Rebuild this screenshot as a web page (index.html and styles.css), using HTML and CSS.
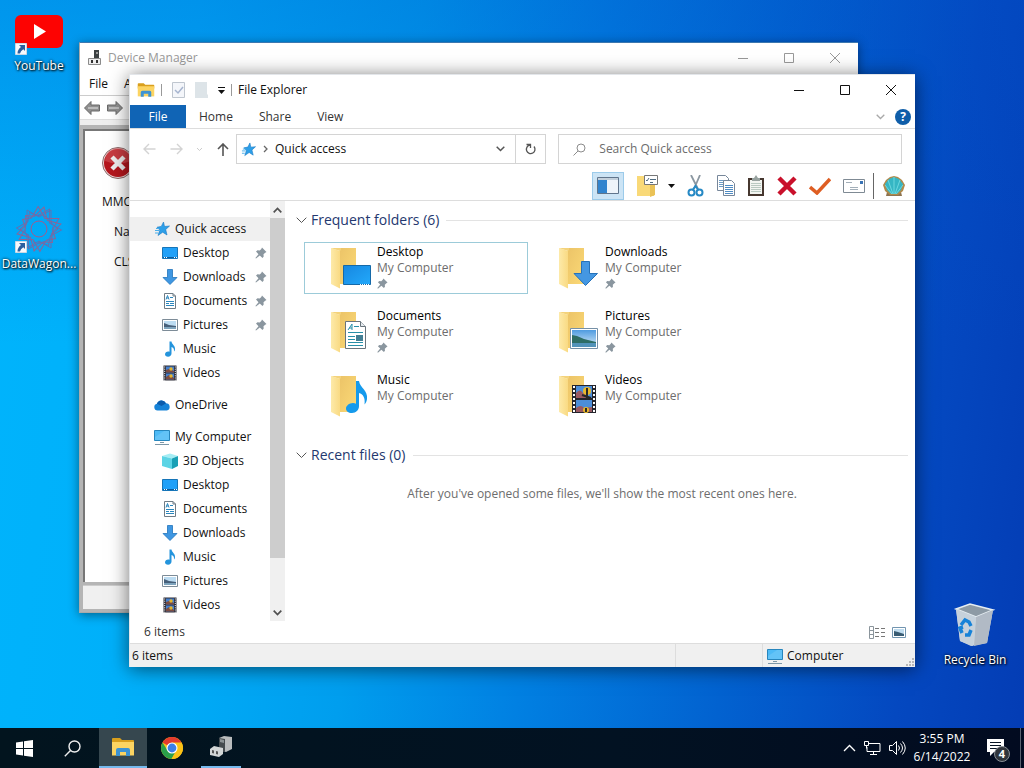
FILE: index.html
```html
<!DOCTYPE html>
<html lang="en">
<head>
<meta charset="utf-8">
<title>Desktop</title>
<link rel="stylesheet" href="styles.css">
</head>
<body>
<svg class="defs" aria-hidden="true">
  <defs>
    <linearGradient id="gFold" x1="0" y1="0" x2="1" y2="0"><stop offset="0" stop-color="#fdeaa9"/><stop offset="1" stop-color="#f9da83"/></linearGradient>
    <linearGradient id="gBack" x1="0" y1="0" x2="1" y2="1"><stop offset="0" stop-color="#ecc468"/><stop offset="1" stop-color="#fbd976"/></linearGradient>
    <linearGradient id="gBlue" x1="0" y1="0" x2="1" y2="1"><stop offset="0" stop-color="#1787e0"/><stop offset="1" stop-color="#22a9fb"/></linearGradient>
    <linearGradient id="gSky" x1="0" y1="0" x2="0" y2="1"><stop offset="0" stop-color="#4f9be0"/><stop offset="1" stop-color="#d8ecf8"/></linearGradient>
  </defs>
  <symbol id="i-star" viewBox="0 0 16 16"><path d="M9.500 1l1 4.500 5-.5-3.800 3.500 1.300 5.500-4.300-2.800-4.700 3.300 1.800-5.400L3 6.200l4.300-.8z" fill="#2d9fe8" stroke="#1879c4" stroke-width=".6"/><path d="M1 9.500h4M1 12h3M2 7.500h3" stroke="#49aeea"/></symbol>
  <symbol id="i-desktop" viewBox="0 0 16 16"><path d="M.5 2.500h15v11H.5z" fill="#20a0f8" stroke="#1675b8"/><path d="M1 12.500h14" stroke="#0c5b9c"/><path d="M2 12.500h1m1 0h1m7 0h1m1 0h1" stroke="#fff"/></symbol>
  <symbol id="i-down" viewBox="0 0 16 16"><path d="M5.500.5h5v8h4.500L8 15.500 1 8.500h4.500z" fill="#3f97e2" stroke="#2274bb" stroke-width=".8"/></symbol>
  <symbol id="i-doc" viewBox="0 0 16 16"><path d="M2.500.5H11l2.500 2.500v12.500h-11z" fill="#fff" stroke="#6f7c86"/><path d="M11 .5V3h2.500" fill="none" stroke="#6f7c86"/><path d="M4 6.500l1.500-4L7 6.500M4.500 5h2M8 4.500h3M4 8.500h8M4 10.500h3M4 12.500h8M8 10.500h4" fill="none" stroke="#2a86bd"/></symbol>
  <symbol id="i-pic" viewBox="0 0 16 16"><path d="M.5 2.500h15v11H.5z" fill="#fff" stroke="#7d8c98"/><path d="M2 4h12v8H2z" fill="#bcdcf2"/><path d="M2 6l5 2 7 1v3H2z" fill="#47607a"/><path d="M2 10h12v2H2z" fill="#7ea4bd"/></symbol>
  <symbol id="i-music" viewBox="0 0 16 16"><path d="M7.500.5h2c.3 3 4 4 3.500 8-.1.900-.5 1.500-1 2 .3-3-1-4-2.500-4.500V12.500c0 2-1.500 3.200-3.400 3.200S3 14.600 3 13.200s1.500-2.700 3.200-2.700c.5 0 1 .1 1.300.3z" fill="#2494dc"/></symbol>
  <symbol id="i-video" viewBox="0 0 16 16"><path d="M1.500.5h13v15h-13z" fill="#2a2a35"/><path d="M4 1.500h8v6H4zM4 8.500h8v6H4z" fill="#4580cf"/><path d="M4 5l3-1 5 2v1.500H4zM4 12l3-2 5 3v1.500H4z" fill="#7c4c42"/><circle cx="9" cy="4" r="1.700" fill="#e5b52c"/><circle cx="9" cy="11" r="1.700" fill="#e5b52c"/><path d="M2.700 1.500v14M13.300 1.500v14" stroke="#fff" stroke-dasharray="1 1.200"/></symbol>
  <symbol id="i-cloud" viewBox="0 0 16 16"><path d="M3.500 13.500a3.400 3.400 0 0 1-.6-6.700A5 5 0 0 1 12 6.200a3.700 3.700 0 0 1 .8 7.300z" fill="#1683d8"/><path d="M2.900 6.800A5 5 0 0 1 12 6.200L7.500 9z" fill="#0b5cad"/></symbol>
  <symbol id="i-pc" viewBox="0 0 16 16"><path d="M.5 1.500h15v10H.5z" fill="#4dbaf6" stroke="#2786bd"/><path d="M1 8l9-6h5v9H1z" fill="#7accf8" opacity=".5"/><path d="M6 13.500h4M1 15.500h14" stroke="#7c97a8"/></symbol>
  <symbol id="i-cube" viewBox="0 0 16 16"><path d="M0 3l8-2.500 8 2.500-6 2.500z" fill="#a5edf4"/><path d="M0 3l10 2.500V16L0 13z" fill="#5cd4e5"/><path d="M10 5.500L16 3v10l-6 3z" fill="#18a0b5"/></symbol>
  <symbol id="i-pin" viewBox="0 0 12 12"><path d="M7 .5l4.500 4.500-1.300.7-1.700 1.600.2 2.200L7.500 11 4.800 8.500 1 11.600.4 11l3.100-3.800L1 4.500l1.500-1.200 2.200.2L6.300 2z" fill="#8a969f"/></symbol>
  <symbol id="i-base" viewBox="0 0 44 48"><path d="M9 4h16v36H9z" fill="url(#gBack)"/><path d="M0 4l9 3v37.500L0 40z" fill="url(#gFold)"/><path d="M0 4h10v2L9 7z" fill="#f4d37b"/></symbol>
  <symbol id="i-explorer" viewBox="0 0 24 20"><path d="M1 2q0-1 1-1h7l2 2h11q1 0 1 1v4H1z" fill="#d99f1d"/><path d="M1 5h22v13.500H1z" fill="#fcd462"/><path d="M5 19v-6q0-2 2-2h10q2 0 2 2v6h-4v-4H9v4z" fill="#3d93d3"/></symbol>
  <symbol id="i-shortcut" viewBox="0 0 12 12"><path d="M.5.5h11v11H.5z" fill="#f6f9fc" stroke="#cbd8e4"/><path d="M4 2h6v6L8.300 6.300Q5.500 8 5 10.500H2.500Q2.500 6.500 6 4z" fill="#2c5f9e"/></symbol>
  <symbol id="i-rosette" viewBox="0 0 48 48"><g fill="none" stroke-width="1" stroke="#5f72b4"><path id="sq" d="M12 5l12 7 12-7v13l7 6-7 6v13l-12-7-12 7V30l-7-6 7-6z"/><use href="#sq" transform="rotate(30 24 24)" stroke="#8d6496"/><use href="#sq" transform="rotate(60 24 24)"/><use href="#sq" transform="rotate(45 24 24)" stroke="#8d6496"/><circle cx="24" cy="24" r="8" stroke="#a05c8e"/><circle cx="24" cy="24" r="14" stroke-dasharray="3 2"/></g></symbol>
  <symbol id="i-device" viewBox="0 0 24 24"><path d="M10 3l5-2 8 1v12l-6 3-7-2z" fill="#b9bcbd"/><path d="M10 3l6 1v13l-6-2z" fill="#454b4e"/><path d="M11 4l4 1v3l-4-1z" fill="#8b9294"/><path d="M1 14l4-3 9 2v6l-4 3-9-2z" fill="#d3d6d6"/><path d="M3 15l2 .5v3L3 18zM7 16l2 .5v3L7 19z" fill="#555"/></symbol>
</svg>

<main class="desktop">
  <nav class="shortcuts" aria-label="Desktop shortcuts">
    <a class="shortcut" href="#youtube">
      <span class="art"><svg width="48" height="48" viewBox="0 0 48 48"><rect y="8" width="48" height="33" rx="6" fill="#fd0302"/><path d="M19 17v15l12-7.500z" fill="#fff"/></svg><svg class="arrow"><use href="#i-shortcut"/></svg></span>
      YouTube
    </a>
    <a class="shortcut" href="#datawagon">
      <span class="art"><svg width="48" height="48"><use href="#i-rosette"/></svg><svg class="arrow"><use href="#i-shortcut"/></svg></span>
      DataWagon...
    </a>
  </nav>
  <a class="shortcut bin" href="#bin">
    <svg width="48" height="48" viewBox="0 0 48 48"><path d="M5 8L19 3l23 6-6 33-16 3-11-5z" fill="#cdd6dd"/><path d="M5 8l14-5 23 6-17 7z" fill="#8d9aa5" stroke="#e6edf2" stroke-width="1.500"/><path d="M25 16L42 9l-6 33-13 3z" fill="#b1bac5"/><path d="M5 8l20 8-3 29-13-5z" fill="#c6d1db"/><path d="M10 24l4-5 4 2 2 4m0 4l-2 5h-4m-3-2l-2-5 3-1" fill="none" stroke="#1682d8" stroke-width="3.500"/></svg>
    Recycle Bin
  </a>

  <section class="window device" aria-label="Device Manager">
    <header class="device-title">
      <svg width="16" height="16" viewBox="0 0 16 16"><path d="M7 0h5v8H7z" fill="#3c4143"/><path d="M9 2h2v2H9z" fill="#999"/><path d="M1.500 8.500h12v6h-12z" fill="#eee" stroke="#8b8b8b"/><path d="M4 10h2v3H4zM9 10h2v3H9z" fill="#333"/></svg>
      <span>Device Manager</span>
      <div class="caption">
        <button aria-label="Minimize"><svg viewBox="0 0 12 12"><path d="M1 6.500h10"/></svg></button>
        <button aria-label="Maximize"><svg viewBox="0 0 12 12"><path d="M1.500 1.500h9v9h-9z"/></svg></button>
        <button aria-label="Close"><svg viewBox="0 0 12 12"><path d="M1 1l10 10M11 1L1 11"/></svg></button>
      </div>
    </header>
    <div class="device-menu"><button>File</button><button>Action</button></div>
    <div class="device-tools">
      <button aria-label="Back"><svg width="16" height="16" viewBox="0 0 16 16"><path d="M.5 8L7 1.500v3.500h8.500v6H7v3.500z" fill="#8f8f8f" stroke="#686868"/><path d="M4 8h10" stroke="#bbb" stroke-width="2"/></svg></button>
      <button aria-label="Forward"><svg width="16" height="16" viewBox="0 0 16 16"><path d="M15.500 8L9 1.500v3.500H.5v6H9v3.500z" fill="#8f8f8f" stroke="#686868"/><path d="M2 8h10" stroke="#bbb" stroke-width="2"/></svg></button>
    </div>
    <div class="device-body">
      <div class="device-page">
        <svg width="32" height="32" viewBox="0 0 32 32"><circle cx="16" cy="16" r="15.500" fill="#efdada" stroke="#8c6a6a"/><circle cx="16" cy="16" r="14" fill="#b5161d"/><path d="M3 14a13 13 0 0 1 26 0q-13 5-26 0z" fill="#d4555a" opacity=".6"/><path d="M10 10l12 12M22 10L10 22" stroke="#eee" stroke-width="4.500"/></svg>
        <p class="msg">MMC has detected an error</p>
        <p>Name:</p>
        <p>CLSID:</p>
      </div>
    </div>
    <div class="device-status"></div>
  </section>

  <section class="window explorer" aria-label="File Explorer">
    <header class="title">
      <svg width="18" height="16"><use href="#i-explorer"/></svg>
      <i class="bar"></i>
      <button aria-label="Properties"><svg width="13" height="16" viewBox="0 0 13 16"><path d="M.5.500h12v15H.5z" fill="#f4f6fa" stroke="#bfc6cf"/><path d="M3 8l3 3 5-6" fill="none" stroke="#a6b4cf" stroke-width="1.500"/></svg></button>
      <button aria-label="New folder"><svg width="13" height="16" viewBox="0 0 13 16"><path d="M0 0h12v12l1 1v3H0z" fill="#dde4e8"/></svg></button>
      <button aria-label="Customize toolbar"><svg width="7" height="9" viewBox="0 0 7 9"><path d="M0 1.500h7" stroke="#111"/><path d="M0 4h7L3.500 8z" fill="#111"/></svg></button>
      <i class="bar"></i>
      <span>File Explorer</span>
      <div class="caption">
        <button aria-label="Minimize"><svg viewBox="0 0 12 12"><path d="M1 6.500h10"/></svg></button>
        <button aria-label="Maximize"><svg viewBox="0 0 12 12"><path d="M1.500 1.500h9v9h-9z"/></svg></button>
        <button aria-label="Close"><svg viewBox="0 0 12 12"><path d="M1 1l10 10M11 1L1 11"/></svg></button>
      </div>
    </header>
    <div class="tabs">
      <button class="tab file">File</button><button class="tab">Home</button><button class="tab">Share</button><button class="tab">View</button>
      <div class="ribbon-end">
        <button aria-label="Expand ribbon"><svg width="9" height="6" viewBox="0 0 9 6"><path d="M.7.7l3.800 3.800L8.300.7" fill="none" stroke="#a9a9a9" stroke-width="1.300"/></svg></button>
        <button class="help" aria-label="Help">?</button>
      </div>
    </div>
    <div class="address">
      <div class="moves">
        <button aria-label="Back"><svg width="13" height="12" viewBox="0 0 13 12"><path d="M6 1L1 6l5 5M1 6h11.500" fill="none" stroke="#d3d3d3" stroke-width="1.400"/></svg></button>
        <button aria-label="Forward"><svg width="13" height="12" viewBox="0 0 13 12"><path d="M7 1l5 5-5 5M12 6H.5" fill="none" stroke="#d3d3d3" stroke-width="1.400"/></svg></button>
        <button aria-label="Recent"><svg width="7" height="5" viewBox="0 0 7 5"><path d="M1 1l2.500 2.500L6 1" fill="none" stroke="#ccc"/></svg></button>
        <button aria-label="Up"><svg width="12" height="13" viewBox="0 0 12 13"><path d="M1 6l5-5 5 5M6 1v12" fill="none" stroke="#555" stroke-width="1.600"/></svg></button>
      </div>
      <div class="path">
        <svg width="15" height="15"><use href="#i-star"/></svg>
        <svg width="5" height="8" viewBox="0 0 5 8"><path d="M1 1l3 3-3 3" fill="none" stroke="#666" stroke-width="1.300"/></svg>
        <button class="crumb">Quick access</button>
        <button class="drop" aria-label="Previous locations"><svg width="9" height="6" viewBox="0 0 9 6"><path d="M.7.7l3.800 3.800L8.300.7" fill="none" stroke="#555" stroke-width="1.500"/></svg></button>
        <button class="refresh" aria-label="Refresh"><svg width="12" height="12" viewBox="0 0 12 12"><path d="M9 3.500A4.300 4.300 0 1 1 5 2M1.500 1.500H5.500V5" fill="none" stroke="#555" stroke-width="1.300"/></svg></button>
      </div>
      <label class="search">
        <svg width="13" height="13" viewBox="0 0 13 13"><circle cx="8" cy="5" r="4" fill="none" stroke="#8c8c8c"/><path d="M5 8l-4.500 4.500" stroke="#8c8c8c"/></svg>
        <input type="search" placeholder="Search Quick access" aria-label="Search Quick access">
      </label>
    </div>
    <div class="tools">
      <button class="pane" aria-label="Navigation pane"><svg width="22" height="17" viewBox="0 0 22 17"><path d="M.5.500h21v16H.5z" fill="#eef4fa" stroke="#60758c"/><path d="M1 1h20v2H1z" fill="#c3d0dc"/><path d="M1 3h9v13H1z" fill="#3184ce"/></svg></button>
      <button class="views" aria-label="Folder options"><svg width="22" height="22" viewBox="0 0 22 22"><path d="M1 1h7v2h10v18H1z" fill="#f9d978"/><path d="M14 4h5v16l-5 2z" fill="#eac257"/><path d="M8.500.500h13v9h-13z" fill="#fff" stroke="#777"/><path d="M10 5l1 1 2-3M14 4.500h6M14 7.500h3" fill="none" stroke="#4e6a80"/></svg><svg width="7" height="4" viewBox="0 0 7 4"><path d="M0 0h7L3.500 4z" fill="#111"/></svg></button>
      <button aria-label="Cut"><svg width="18" height="22" viewBox="0 0 18 22"><path d="M4 0l7 14M13 0L7 14" stroke="#8b97a1" stroke-width="1.800"/><circle cx="4.500" cy="17.500" r="3" fill="none" stroke="#2689c5" stroke-width="2"/><circle cx="12.500" cy="17.500" r="3" fill="none" stroke="#2689c5" stroke-width="2"/><path d="M6 14.500L8.500 11l2.500 3.500" fill="none" stroke="#2689c5" stroke-width="2"/></svg></button>
      <button aria-label="Copy"><svg width="18" height="22" viewBox="0 0 18 22"><path d="M.5.500h8l3 3v12H.5z" fill="#fff" stroke="#77879a"/><path d="M2 5.500h7M2 7.500h7M2 9.500h7M2 11.500h7" stroke="#6c9cc6"/><path d="M6.500 5.500h8l3 3v12h-11z" fill="#fff" stroke="#77879a"/><path d="M8 10.500h8M8 12.500h8M8 14.500h8M8 16.500h8M8 18.500h8" stroke="#4e8bc3"/></svg></button>
      <button aria-label="Paste"><svg width="18" height="22" viewBox="0 0 18 22"><path d="M1 3h16v18H1z" fill="#46372f"/><path d="M3 5h12v14H3z" fill="#f2f5f1"/><path d="M4 8.500h10M4 10.500h10M4 12.500h10M4 14.500h10M4 16.500h10" stroke="#b9c9c1"/><path d="M5 3h2l2-3 2 3h2v3H5z" fill="#97a29f"/></svg></button>
      <button aria-label="Delete"><svg width="20" height="20" viewBox="0 0 20 20"><path d="M2 2l16 16M18 2L2 18" stroke="#c9102b" stroke-width="4.500"/></svg></button>
      <button aria-label="Apply"><svg width="22" height="18" viewBox="0 0 22 18"><path d="M1 10l7 6L21 2" fill="none" stroke="#de5e23" stroke-width="3.500"/></svg></button>
      <button aria-label="Mail"><svg width="22" height="14" viewBox="0 0 22 14"><path d="M.5.500h21v13H.5z" fill="#fff" stroke="#7f8a94"/><path d="M3 3.500h6M7 8.500h8M7 10.500h8" stroke="#a3afb9"/><path d="M17 2h3v3h-3z" fill="#3973b5"/></svg></button>
      <i class="tool-bar"></i>
      <button aria-label="Shell"><svg width="24" height="22" viewBox="0 0 24 22"><path d="M5 17h14l1 4H4z" fill="#8d7350"/><path d="M12 1l4 1 4 3 3 5-2 6-5 4H8l-5-4-2-6 3-5 4-3z" fill="#b08a4c"/><path d="M12 2l5 2 4 5-2 6-4 4H9l-4-4-2-6 4-5z" fill="#35b6c4"/><path d="M12 19V2M11 19L6 5M13 19l5-14M10 19L3 10M14 19l7-9" stroke="#7be0e4" stroke-width=".8"/></svg></button>
    </div>

    <div class="body">
      <nav class="tree" aria-label="Folders">
        <a class="root on" href="#quick"><svg><use href="#i-star"/></svg>Quick access</a>
        <a href="#q1"><svg><use href="#i-desktop"/></svg>Desktop<svg class="pin"><use href="#i-pin"/></svg></a>
        <a href="#q2"><svg><use href="#i-down"/></svg>Downloads<svg class="pin"><use href="#i-pin"/></svg></a>
        <a href="#q3"><svg><use href="#i-doc"/></svg>Documents<svg class="pin"><use href="#i-pin"/></svg></a>
        <a href="#q4"><svg><use href="#i-pic"/></svg>Pictures<svg class="pin"><use href="#i-pin"/></svg></a>
        <a href="#q5"><svg><use href="#i-music"/></svg>Music</a>
        <a href="#q6"><svg><use href="#i-video"/></svg>Videos</a>
        <a class="root gap" href="#od"><svg><use href="#i-cloud"/></svg>OneDrive</a>
        <a class="root gap" href="#pc"><svg><use href="#i-pc"/></svg>My Computer</a>
        <a href="#c1"><svg><use href="#i-cube"/></svg>3D Objects</a>
        <a href="#c2"><svg><use href="#i-desktop"/></svg>Desktop</a>
        <a href="#c3"><svg><use href="#i-doc"/></svg>Documents</a>
        <a href="#c4"><svg><use href="#i-down"/></svg>Downloads</a>
        <a href="#c5"><svg><use href="#i-music"/></svg>Music</a>
        <a href="#c6"><svg><use href="#i-pic"/></svg>Pictures</a>
        <a href="#c7"><svg><use href="#i-video"/></svg>Videos</a>
      </nav>
      <div class="scroll">
        <button aria-label="Scroll up"><svg width="9" height="6" viewBox="0 0 9 6"><path d="M.7 5.300l3.800-3.800 3.800 3.800" fill="none" stroke="#505050" stroke-width="1.700"/></svg></button>
        <div class="track"><div class="thumb"></div></div>
        <button aria-label="Scroll down"><svg width="9" height="6" viewBox="0 0 9 6"><path d="M.7.7l3.800 3.800L8.300.7" fill="none" stroke="#505050" stroke-width="1.700"/></svg></button>
      </div>
      <div class="content">
        <h2><svg width="11" height="7" viewBox="0 0 11 7"><path d="M.7.7l4.800 4.800L10.300.7" fill="none" stroke="#555"/></svg>Frequent folders (6)</h2>
        <div class="tiles">
          <a class="tile sel" href="#t1"><svg class="big" viewBox="0 0 44 48"><use href="#i-base"/><path d="M12.500 21.500h27v19h-27z" fill="url(#gBlue)" stroke="#1569a8"/><path d="M29 40.500h10" stroke="#fff" stroke-dasharray="1 1"/></svg><span><b>Desktop</b>My Computer<svg class="pin"><use href="#i-pin"/></svg></span></a>
          <a class="tile" href="#t2"><svg class="big" viewBox="0 0 44 48"><use href="#i-base"/><path d="M22.500 17.500h8v12h8L26.500 41.500 15 29.500h7.500z" fill="#4497e2" stroke="#2672b9"/></svg><span><b>Downloads</b>My Computer<svg class="pin"><use href="#i-pin"/></svg></span></a>
          <a class="tile" href="#t3"><svg class="big" viewBox="0 0 44 48"><use href="#i-base"/><path d="M14.500 13.500h15l5 5v22h-20z" fill="#fff" stroke="#69747c"/><path d="M29.500 13.500v5h5" fill="#e5eaee" stroke="#69747c"/><path d="M17 22l4-6v6M18 20h3M23 18.500h5M17 24.500h15M17 28.500h7M17 31.500h7M17 34.500h15M17 37.500h15" stroke="#278fa8" fill="none"/><path d="M25 27h7v6h-7z" fill="#437f94"/></svg><span><b>Documents</b>My Computer<svg class="pin"><use href="#i-pin"/></svg></span></a>
          <a class="tile" href="#t4"><svg class="big" viewBox="0 0 44 48"><use href="#i-base"/><path d="M11.500 20.500h27v20h-27z" fill="#fff" stroke="#7590a7"/><path d="M13 22h24v17H13z" fill="url(#gSky)"/><path d="M13 27l5 1 7 3 12 3v2H13z" fill="#2e6d65"/><path d="M13 35h24v4H13z" fill="#5293b9"/></svg><span><b>Pictures</b>My Computer<svg class="pin"><use href="#i-pin"/></svg></span></a>
          <a class="tile" href="#t5"><svg class="big" viewBox="0 0 44 48"><use href="#i-base"/><path d="M25 9h3c1 7 9 9 8 18-.3 2-1 4-2.500 5.500C34.500 26 32 22 28 21v13c0 4-3 7-7 7s-6-2-6-4.500 3-5.500 7-5.500c1.200 0 2.300.3 3 .7z" fill="#159aec"/></svg><span><b>Music</b>My Computer</span></a>
          <a class="tile" href="#t6"><svg class="big" viewBox="0 0 44 48"><use href="#i-base"/><path d="M13 13h24v28H13z" fill="#23242c"/><path d="M17 14h16v12H17zM17 28h16v12H17z" fill="#4c8ed9"/><path d="M17 21q4-5 7 0l3 1v4H17zM17 36q5-4 8 0l8-1v5H17z" fill="#9a5a63"/><circle cx="28" cy="19" r="4" fill="#e9b82a"/><circle cx="27" cy="38" r="3" fill="#e9b82a"/><path d="M28 16v11M23 23l9 3M27 36v4" stroke="#282828" stroke-width="2"/><path d="M15 14v27M35 14v27" stroke="#fff" stroke-width="2" stroke-dasharray="2 2"/></svg><span><b>Videos</b>My Computer</span></a>
        </div>
        <h2><svg width="11" height="7" viewBox="0 0 11 7"><path d="M.7.7l4.800 4.800L10.300.7" fill="none" stroke="#555"/></svg>Recent files (0)</h2>
        <p class="empty">After you've opened some files, we'll show the most recent ones here.</p>
      </div>
    </div>
    <div class="count">
      <span>6 items</span>
      <button aria-label="Details view"><svg width="17" height="13" viewBox="0 0 17 13"><path d="M.5.500h4v12h-4zM.5 4.500h4M.5 8.500h4" fill="#fff" stroke="#8b959c"/><path d="M6 2.500h11M6 6.500h11M6 10.500h11" stroke="#777" stroke-dasharray="4 2"/></svg></button>
      <button aria-label="Large icons view"><svg width="14" height="11" viewBox="0 0 14 11"><path d="M.5.500h13v10H.5z" fill="#fff" stroke="#7295b0"/><path d="M2 2h10v7H2z" fill="#bfdcef"/><path d="M2 4l4 1 6 2v2H2z" fill="#395c73"/></svg></button>
    </div>
    <footer class="status">
      <span class="items">6 items</span><span class="blank"></span>
      <span class="zone"><svg width="16" height="16"><use href="#i-pc"/></svg>Computer</span>
      <svg class="grip" width="9" height="9" viewBox="0 0 9 9"><path d="M6 1h2M3 4h2M6 4h2M0 7h2M3 7h2M6 7h2" stroke="#b8b8b8" stroke-width="2"/></svg>
    </footer>
  </section>
</main>

<footer class="taskbar">
  <button class="task" aria-label="Start"><svg width="17" height="17" viewBox="0 0 17 17"><path d="M0 2.500l7-1V8H0zM8 1.300L17 0v8H8zM0 9h7v6.500l-7-1zM8 9h9v8l-9-1.300z" fill="#fff"/></svg></button>
  <button class="task" aria-label="Search"><svg width="17" height="17" viewBox="0 0 17 17"><circle cx="10.500" cy="6.500" r="5.500" fill="none" stroke="#eee" stroke-width="1.400"/><path d="M6.500 10.500L.8 16.200" stroke="#eee" stroke-width="1.400"/></svg></button>
  <button class="task active" aria-label="File Explorer"><svg width="24" height="20"><use href="#i-explorer"/></svg></button>
  <button class="task" aria-label="Chrome"><svg width="24" height="24" viewBox="0 0 24 24"><circle cx="12" cy="12" r="11" fill="#fbc116"/><path d="M12 12L2.500 6.500A11 11 0 0 1 21.500 6.500z" fill="#e33b2e"/><path d="M2.500 6.500A11 11 0 0 0 11.500 23L16.500 14 12 12 7.500 14.500z" fill="#2aa04a"/><path d="M12 6.500h9.500A11 11 0 0 1 11.500 23l5-8.500z" fill="#fbc116"/><circle cx="12" cy="12" r="5.500" fill="#fff"/><circle cx="12" cy="12" r="4.400" fill="#3d7fe8"/></svg></button>
  <button class="task running" aria-label="Device Manager"><svg width="24" height="24"><use href="#i-device"/></svg></button>
  <div class="tray">
    <button aria-label="Hidden icons"><svg width="13" height="8" viewBox="0 0 13 8"><path d="M1 7l5.500-5.500L12 7" fill="none" stroke="#fff" stroke-width="1.300"/></svg></button>
    <button aria-label="Network"><svg width="17" height="14" viewBox="0 0 17 14"><path d="M5 2.500h11v8H3V6M9.500 10.500v3M6 13.500h7M.5.500h4v4h-4zM2.500 4.500v3" fill="none" stroke="#fff"/></svg></button>
    <button aria-label="Volume"><svg width="17" height="14" viewBox="0 0 17 14"><path d="M.5 4.500h3l4-4v13l-4-4h-3zM9.500 4.500q2 2.500 0 5M11.500 2.500q4 4.500 0 9M13.500.500q5.500 6.500 0 13" fill="none" stroke="#fff"/></svg></button>
    <button class="clock"><span>3:55 PM</span><span>6/14/2022</span></button>
    <button class="notes" aria-label="4 notifications"><svg width="17" height="18" viewBox="0 0 17 18"><path d="M0 0h17v13H7l-4 4v-4H0z" fill="#fff"/><path d="M3 3.500h11M3 6.500h11M3 9.500h11" stroke="#071425" stroke-width="1.200"/></svg><span class="badge">4</span></button>
    <button class="peek" aria-label="Show desktop"></button>
  </div>
</footer>
</body>
</html>
```
FILE: styles.css
```css
* { box-sizing: border-box; }
body {
  margin: 0;
  min-height: 100vh;
  display: flex;
  flex-direction: column;
  font: 12px/16px "Open Sans", "Noto Sans", sans-serif;
  color: #111;
  background:
    linear-gradient(to bottom, rgba(0, 80, 200, .3), rgba(0, 100, 220, 0) 45%),
    linear-gradient(97deg, #00b4fc 0%, #00b0fa 18%, #009eee 38%, #0180e2 54%, #0262d0 72%, #0448c0 88%, #043cb4 100%);
}
button { font: inherit; color: inherit; border: 0; padding: 0; margin: 0; background: none; display: flex; align-items: center; justify-content: center; }
a { color: inherit; text-decoration: none; }
svg { flex: none; display: block; }
h2, p { margin: 0; font-weight: normal; }
.defs { position: absolute; width: 0; height: 0; }
.desktop { flex: 1; position: relative; overflow: hidden; }

.shortcuts { width: 78px; display: flex; flex-direction: column; gap: 131px; padding-top: 7px; }
.shortcut { display: flex; flex-direction: column; align-items: center; gap: 3px; color: #fff; text-shadow: 1px 1px 2px #000, 0 0 3px #000; white-space: nowrap; }
.art { position: relative; }
.arrow { position: absolute; left: 0; bottom: 0; width: 12px; height: 12px; }
.bin { position: absolute; right: 12px; top: 601px; width: 74px; }

.window { position: absolute; display: flex; flex-direction: column; background: #fff; }
.caption { display: flex; margin-left: auto; }
.caption button { width: 46px; height: 28px; }
.caption svg { width: 12px; height: 12px; fill: none; stroke: currentColor; }

.device { left: 79px; right: 166px; top: 42px; height: 571px; border: 1px solid #aaa; border-top-color: #3d78b0; border-right: 0; box-shadow: 0 2px 10px rgba(0, 0, 0, .45); }
.device-title { display: flex; align-items: center; gap: 5px; padding-left: 7px; height: 29px; color: #999; }
.device-menu { display: flex; gap: 16px; padding: 0 9px; height: 24px; border-bottom: 1px solid #ccc; }
.device-tools { display: flex; gap: 7px; padding: 0 4px; height: 24px; border-bottom: 1px solid #ddd; }
.device-body { flex: 1; padding: 4px 3px 0; background: #b5b5b5; border-top: 5px solid #eee; }
.device-page { height: 100%; border: 2px solid #777; border-right: 0; border-bottom: 0; padding: 16px 0 0 17px; background: #fff; }
.device-page p { margin-left: 12px; margin-top: 14px; height: 16px; overflow: hidden; white-space: nowrap; }
.device-page .msg { margin-left: 0; margin-top: 15px; }
.device-status { height: 24px; margin: 0 3px 3px; background: #f0f0f0; border-top: 1px solid #ccc; box-shadow: 0 0 0 3px #b5b5b5; }

.explorer { left: 129px; right: 109px; top: 74px; border: 1px solid #e3e6ea; border-right: 0; border-bottom: 0; box-shadow: 0 2px 18px rgba(0, 0, 0, .55); }
.title { display: flex; align-items: center; gap: 6px; height: 30px; padding-left: 7px; }
.title > button { margin-left: 4px; }
.title > .caption { padding-right: 1px; }
.bar { width: 1px; height: 12px; background: #999; }
.tabs { display: flex; height: 24px; border-bottom: 1px solid #ddd; color: #333; }
.tab { padding: 0 13px; height: 23px; }
.tab.file { width: 56px; background: #1064b5; color: #fff; }
.ribbon-end { display: flex; align-items: center; gap: 10px; margin-left: auto; padding-right: 4px; }
.help { width: 16px; height: 16px; border-radius: 50%; background: #0f5ea9; color: #fff; font-weight: bold; }

.address { display: flex; padding: 5px 13px 1px 0; }
.moves { width: 106px; display: flex; align-items: center; justify-content: space-between; padding: 0 7px 0 13px; }
.path, .search { display: flex; align-items: center; height: 30px; min-width: 0; border: 1px solid #d4d4d4; }
.path { flex: 312 1 0; padding-left: 4px; gap: 7px; }
.crumb { white-space: nowrap; }
.drop { margin-left: auto; width: 15px; }
.refresh { width: 30px; height: 28px; border-left: 1px solid #d4d4d4; }
.search { flex: 336 1 0; margin-left: 12px; padding-left: 14px; gap: 13px; }
.search input { flex: 1; min-width: 0; border: 0; padding: 0; outline: 0; font: inherit; background: none; }
.search input::placeholder { color: #6d6d6d; opacity: 1; }

.tools { display: flex; justify-content: flex-end; align-items: center; gap: 12px; height: 36px; padding: 6px 9px 0 0; border-bottom: 1px solid #ddd; }
.pane { width: 32px; height: 28px; background: #cce4f5; border: 1px solid #9ccbea; }
.views { gap: 10px; }
.tool-bar { width: 1px; height: 26px; background: #666; margin: 0 -4px; }

.body { display: flex; }
.tree { width: 140px; padding: 16px 0 4px; }
.tree a { display: flex; align-items: center; gap: 5px; height: 24px; padding-left: 32px; white-space: nowrap; }
.tree svg { width: 16px; height: 16px; }
.tree .root { padding-left: 24px; }
.tree .on { background: #f0f0f0; }
.tree .gap { margin-top: 8px; }
.tree .pin { width: 12px; height: 12px; margin: 0 3px 0 auto; }
.scroll { width: 15px; display: flex; flex-direction: column; background: #f0f0f0; }
.scroll button { height: 17px; }
.track { flex: 1; }
.thumb { height: 88%; background: #cdcdcd; }
.content { flex: 1; min-width: 0; padding: 8px 7px 0 11px; }
h2 { display: flex; align-items: center; gap: 4px; height: 22px; font-size: 14px; line-height: 22px; color: #24386f; }
h2::after { content: ""; flex: 1; height: 1px; margin-left: 3px; background: #e3e3e3; }
.tiles { display: grid; grid-template-columns: repeat(2, 224px); gap: 12px 4px; padding: 11px 0 22px 8px; }
.tile { height: 52px; display: flex; border: 1px solid transparent; padding-left: 26px; color: #6d6d6d; }
.tile.sel { border-color: #9ccbd9; }
.big { width: 44px; height: 48px; margin-top: 1px; }
.tile span { padding: 1px 0 0 2px; }
.tile b { display: block; font-weight: normal; color: #000; }
.tile .pin { width: 11px; height: 11px; margin-top: 2px; }
.empty { text-align: center; margin-top: 20px; color: #6d6d6d; }

.count { display: flex; align-items: center; gap: 6px; height: 22px; padding: 0 9px 0 14px; color: #333; }
.count span { margin-right: auto; }
.status { display: flex; height: 24px; background: #f0f0f0; border-top: 1px solid #ddd; line-height: 24px; }
.items { flex: 1; padding-left: 2px; }
.blank { width: 88px; border: solid #ddd; border-width: 0 1px; }
.zone { width: 143px; display: flex; align-items: center; gap: 4px; padding-left: 4px; }
.grip { align-self: flex-end; }

.taskbar { height: 40px; display: flex; color: #fff; background: linear-gradient(90deg, #02141e, #021222 60%, #020b20); }
.task { width: 48px; height: 40px; }
.task.active { margin: 0 1px 0 3px; background: #36474f; border-bottom: 2px solid #76b9ed; }
.task.running { width: 40px; margin-left: 5px; border-bottom: 2px solid #76b9ed; }
.tray { margin-left: auto; display: flex; align-items: center; gap: 8px; }
.clock { flex-direction: column; line-height: 18px; width: 56px; white-space: nowrap; }
.notes { position: relative; width: 34px; height: 40px; }
.badge { position: absolute; right: 2px; bottom: 6px; width: 16px; height: 16px; border: 1px solid #8a8f96; border-radius: 50%; background: #30353c; font-weight: bold; font-size: 11px; line-height: 14px; text-align: center; }
.peek { width: 4px; height: 40px; border-left: 1px solid #5a6270; }
```
